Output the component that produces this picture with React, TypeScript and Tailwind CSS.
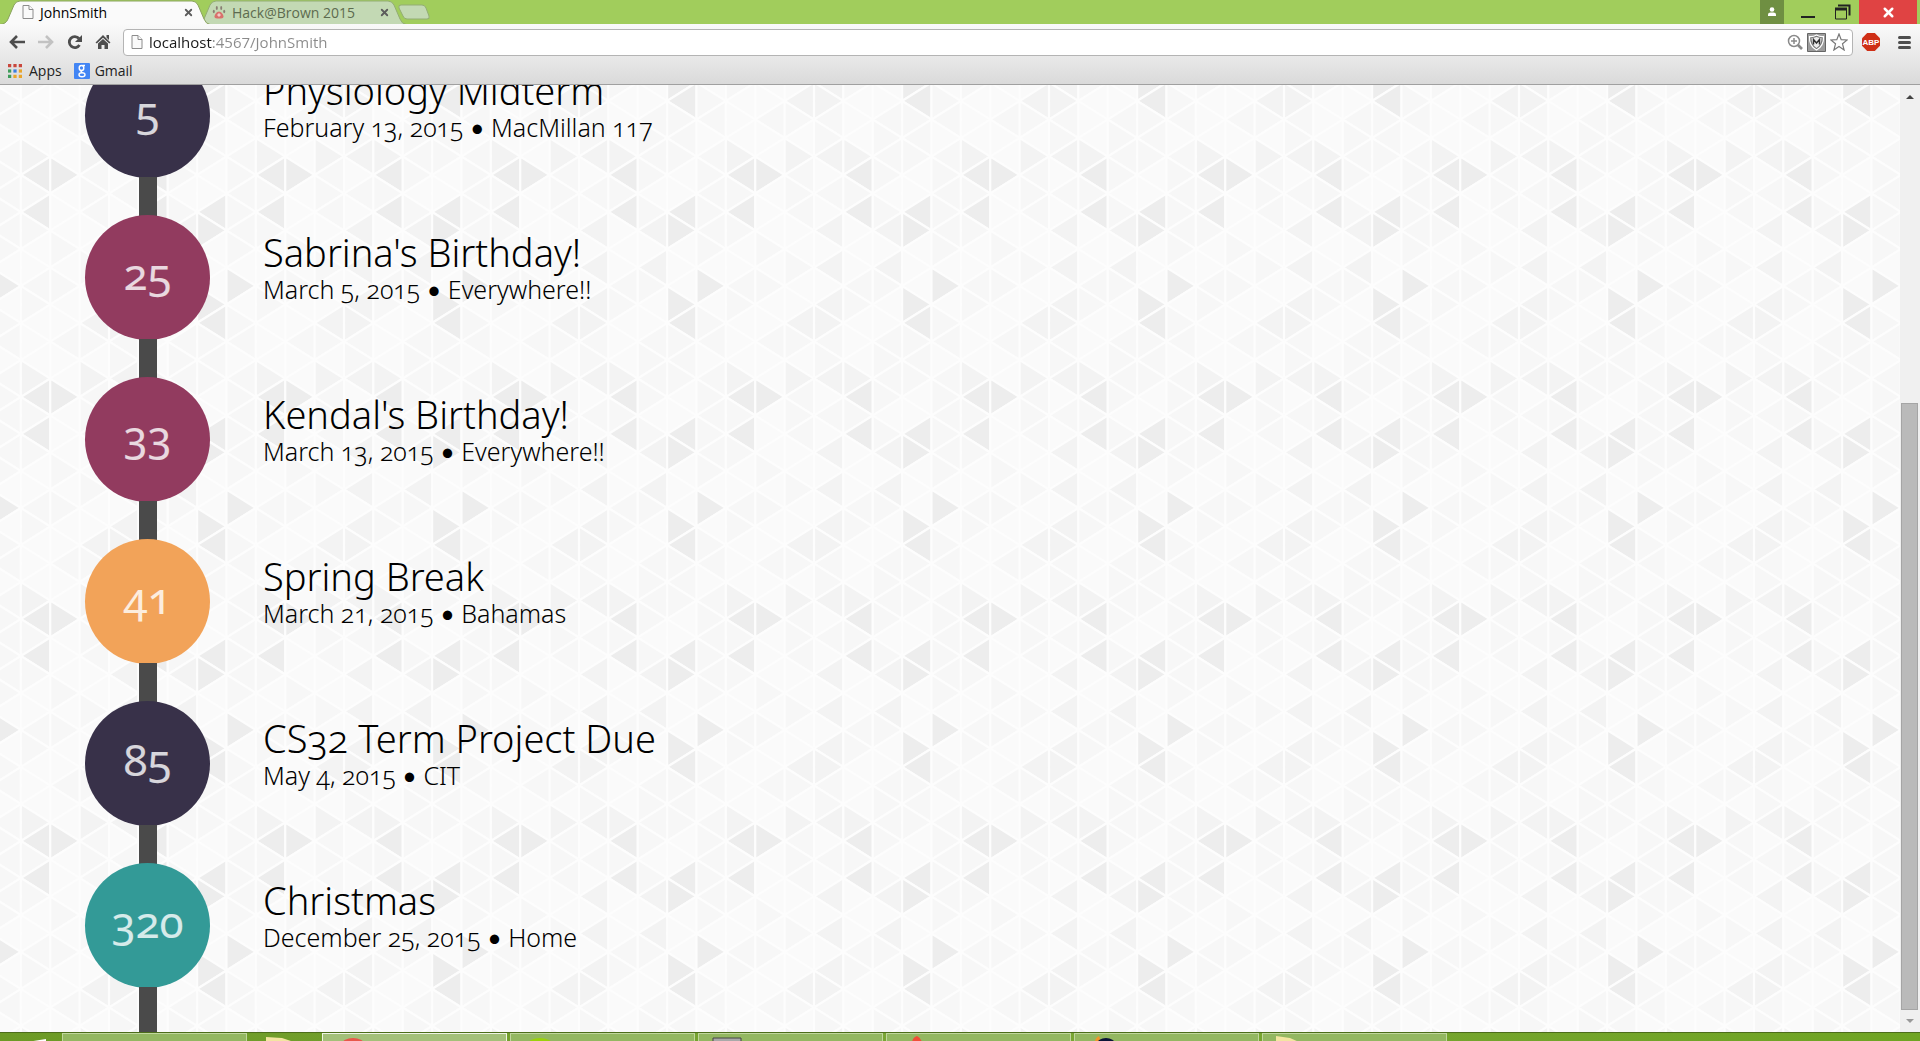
import type { ReactNode } from 'react';
import { X } from 'lucide-react';

const events = [
  { days: 5, title: 'Physiology Midterm', date: 'February 13, 2015', place: 'MacMillan 117', color: 'bg-[#383149]' },
  { days: 25, title: "Sabrina's Birthday!", date: 'March 5, 2015', place: 'Everywhere!!', color: 'bg-[#923b5f]' },
  { days: 33, title: "Kendal's Birthday!", date: 'March 13, 2015', place: 'Everywhere!!', color: 'bg-[#923b5f]' },
  { days: 41, title: 'Spring Break', date: 'March 21, 2015', place: 'Bahamas', color: 'bg-[#f2a359]' },
  { days: 85, title: 'CS32 Term Project Due', date: 'May 4, 2015', place: 'CIT', color: 'bg-[#383149]' },
  { days: 320, title: 'Christmas', date: 'December 25, 2015', place: 'Home', color: 'bg-[#339a97]' },
];

// one string per row of triangles, one digit per column, 0 = lightest
const tile = [
  '20031002',
  '10111011',
  '10110000',
  '22111202',
  '03101331',
  '11001101',
  '03131301',
  '20231100',
  '00001010',
  '20200001',
  '01103110',
  '21030100',
];
const shades = ['#fafafa', '#f7f7f7', '#f3f3f3', '#ededed'];
const colW = 235 / 8;
const rowH = 18.5;

function Triangles() {
  const rows = [tile[11], ...tile, tile[0]];
  return (
    <svg className="absolute inset-0 h-full w-full" aria-hidden="true">
      <pattern id="triangles" patternUnits="userSpaceOnUse" x="109" y="16" width="235" height="222">
        {rows.map((row, i) =>
          row.split('').map((shade, c) => {
            const r = i - 1;
            const y = r * rowH;
            const right = (c + r + 12) % 2 === 0;
            const base = right ? c * colW : (c + 1) * colW;
            const apex = right ? (c + 1) * colW : c * colW;
            return (
              <polygon
                key={`${i}-${c}`}
                points={`${base},${y - rowH} ${apex},${y} ${base},${y + rowH}`}
                fill={shades[Number(shade)]}
                stroke="#fdfdfd"
                strokeWidth="2.2"
                strokeLinejoin="round"
              />
            );
          })
        )}
      </pattern>
      <rect width="100%" height="100%" fill="url(#triangles)" />
    </svg>
  );
}

function PageIcon() {
  return (
    <svg width="12" height="14" viewBox="0 0 12 14" fill="#fafafa" stroke="#8c8c8c" className="shrink-0">
      <path d="M1 .5h6l4 4v9H1z" />
      <path d="M7 .5v4h4" />
    </svg>
  );
}

function PawIcon() {
  return (
    <svg width="14" height="14" viewBox="0 0 14 14" className="shrink-0">
      <path d="M7 6.5c2 0 4.500 3 4.500 5s-2 2-4.500 2-4.500 0-4.500-2 2.500-5 4.500-5z" fill="#d9706c" />
      <g fill="#8a7f74">
        <ellipse cx="1.800" cy="6.500" rx="1" ry="1.800" />
        <ellipse cx="4.800" cy="3" rx="1" ry="2" />
        <ellipse cx="9.200" cy="3" rx="1" ry="2" />
        <ellipse cx="12.200" cy="6.500" rx="1" ry="1.800" />
      </g>
      <path d="M5 10l2-2 2 2-2 2z" fill="#f3c9c5" />
    </svg>
  );
}

function Tab({ icon, label, active }: { icon: ReactNode; label: string; active?: boolean }) {
  return (
    <div className={`relative flex h-6 w-[210px] items-center pr-4 ${active ? 'z-10 pl-[22px]' : '-ml-[14px] pl-[16px]'}`}>
      <svg className="absolute inset-0 h-full w-full" viewBox="0 0 210 24" preserveAspectRatio="none" aria-hidden="true">
        <path
          d="M0 24.500Q6 24 8 19L14 5Q16 1 20 1H192Q196 1 198 5L204 19Q206 24 210 24.500"
          fill={active ? '#fafafa' : '#c3d9b4'}
          stroke={active ? '#8aa35e' : '#93ad74'}
        />
      </svg>
      <button className="relative flex flex-1 items-center gap-[6px] text-left">
        {icon}
        <span className={active ? 'text-black' : 'text-[#5d6b4f]'}>{label}</span>
      </button>
      <button aria-label={`Close ${label}`} className="relative">
        <X size={11} strokeWidth={4} className="text-[#5c5c5c]" />
      </button>
    </div>
  );
}

function TabStrip() {
  return (
    <header className="flex h-6 items-start bg-[#a1cd5c] text-[14px]">
      <Tab active icon={<PageIcon />} label="JohnSmith" />
      <Tab icon={<PawIcon />} label="Hack@Brown 2015" />
      <button aria-label="New tab" className="-ml-2 self-center">
        <svg width="32" height="16" viewBox="0 0 32 16">
          <path d="M3 1h21q3 0 4 3l3 8q1 3-2 3H9q-3 0-4-3L1 4q-1-3 2-3z" fill="#c3d9b4" stroke="#93ad74" />
        </svg>
      </button>
      <div className="ml-auto flex h-full pr-[3px]">
        <button aria-label="User" className="flex w-6 items-center justify-center bg-[#6f8f42]">
          <svg width="10" height="10" viewBox="0 0 10 10" fill="#fff">
            <circle cx="5" cy="2.500" r="2.300" />
            <path d="M1 9V7.500Q1 5.500 3.500 5.500h3Q9 5.500 9 7.500V9z" />
          </svg>
        </button>
        <button aria-label="Minimize" className="flex w-12 items-end justify-center pb-[6px]">
          <span className="h-[2px] w-[14px] bg-[#222]" />
        </button>
        <button aria-label="Restore" className="flex w-[27px] items-center justify-start pl-[3px]">
          <svg width="16" height="16" viewBox="0 0 16 16" fill="none" stroke="#222">
            <path d="M3 1.500h11.500v10" strokeWidth="2" />
            <path d="M.500 5h11v10H.500z" />
            <path d="M0 5h12" strokeWidth="3" />
          </svg>
        </button>
        <button aria-label="Close window" className="flex w-[58px] items-center justify-center bg-[#e04343]">
          <X size={15} strokeWidth={4} className="text-white" />
        </button>
      </div>
    </header>
  );
}

function Toolbar() {
  return (
    <div className="flex h-9 items-center pr-[9px] pl-2">
      <div className="flex w-[115px] items-center gap-[11px]">
        <button aria-label="Back">
          <svg width="18" height="16" viewBox="0 0 18 16" fill="none" stroke="#4d4d4d" strokeWidth="2.600">
            <path d="M17 8H4M9 2L3 8l6 6" />
          </svg>
        </button>
        <button aria-label="Forward">
          <svg width="18" height="16" viewBox="0 0 18 16" fill="none" stroke="#c2c2c2" strokeWidth="2.600">
            <path d="M1 8h13M9 2l6 6-6 6" />
          </svg>
        </button>
        <button aria-label="Reload">
          <svg width="18" height="16" viewBox="0 0 18 16" fill="none" stroke="#4d4d4d" strokeWidth="2.800">
            <path d="M13.500 11A5.500 5.500 0 1 1 13 4.500" />
            <path d="M16 1v7H9z" fill="#4d4d4d" stroke="none" />
          </svg>
        </button>
        <button aria-label="Home">
          <svg width="16" height="16" viewBox="0 0 16 16" fill="#4d4d4d">
            <path d="M8 1l7.500 7.500-1.300 1L8 3.800 1.800 9.500.500 8.500z" />
            <path d="M11.500 1H14v5l-2.500-2.500zM8 5l5 4.500V15H9.500v-4h-3v4H3V9.500z" />
          </svg>
        </button>
      </div>
      <div className="flex h-[27px] flex-1 items-center gap-1 rounded-sm border border-[#b4b4b4] bg-white pr-1 pl-[7px]">
        <PageIcon />
        <input
          aria-label="Address"
          defaultValue="localhost:4567/JohnSmith"
          className="ml-[2px] flex-1 bg-[linear-gradient(to_right,#1a1a1a_63px,#8a8a8a_63px)] bg-clip-text text-[15px] text-transparent outline-none"
        />
        <button aria-label="Zoom">
          <svg width="16" height="16" viewBox="0 0 16 16" fill="none" stroke="#8a8a8a" strokeWidth="1.500">
            <circle cx="7" cy="7" r="5.500" />
            <path d="M4 7h6M7 4v6" />
            <path d="M11 11l4 4" strokeWidth="2.600" />
          </svg>
        </button>
        <button aria-label="Site safety">
          <svg width="19" height="19" viewBox="0 0 19 19">
            <path d="M.500.500h18v18H.500z" fill="#9c9c9c" stroke="#666" />
            <path d="M2.500 3.500Q6 4 9.500 2 13 4 16.500 3.500 17 13 9.500 17 2 13 2.500 3.500z" fill="#777" stroke="#fff" strokeWidth="1.200" />
            <path d="M4.500 5Q7 5 9.500 4q2.500 1 5 1 0 7-5 10-5-3-5-10z" fill="#eee" />
            <path d="M6.500 11.500V6.500l3 3.500 3-3.500v5" fill="none" stroke="#333" strokeWidth="1.500" />
          </svg>
        </button>
        <button aria-label="Bookmark this page">
          <svg width="18" height="18" viewBox="0 0 18 18" fill="#fff" stroke="#777" strokeWidth="1.200">
            <path d="M9 1l2.200 5.700 6 .300-4.700 3.800L14.100 17 9 13.500 3.900 17l1.600-6.200L.800 7l6-.300z" />
          </svg>
        </button>
      </div>
      <button aria-label="Adblock Plus" className="ml-2">
        <svg width="20" height="20" viewBox="0 0 20 20">
          <path d="M6.200 1h7.600L19 6.200v7.600L13.800 19H6.200L1 13.800V6.200z" fill="#cf2f16" />
          <text x="10" y="13" textAnchor="middle" fill="#fff" fontSize="8" fontWeight="700" fontFamily="'Liberation Sans Narrow', 'Liberation Sans', sans-serif">ABP</text>
        </svg>
      </button>
      <button aria-label="Menu" className="ml-[17px] flex flex-col gap-[2px]">
        <span className="h-[3px] w-[13px] rounded-full bg-[#4d4d4d]" />
        <span className="h-[3px] w-[13px] rounded-full bg-[#4d4d4d]" />
        <span className="h-[3px] w-[13px] rounded-full bg-[#4d4d4d]" />
      </button>
    </div>
  );
}

const appColors = ['#c9473d', '#c9473d', '#c9473d', '#3f9c5a', '#3c7ee0', '#e9a52b', '#3f9c5a', '#e9a52b', '#e9a52b'];

function Bookmarks() {
  return (
    <nav className="flex h-6 items-center gap-3 pb-[3px] pl-2 text-[14px] text-[#222]">
      <a href="#apps" className="flex items-center gap-[7px]">
        <svg width="14" height="14" viewBox="0 0 13 13">
          {appColors.map((fill, i) => (
            <rect key={i} x={(i % 3) * 5} y={Math.floor(i / 3) * 5} width="3" height="3" fill={fill} />
          ))}
        </svg>
        Apps
      </a>
      <a href="#gmail" className="flex items-center gap-[5px]">
        <svg width="16" height="16" viewBox="0 0 16 16">
          <rect width="16" height="16" rx="1" fill="#4285f4" />
          <g fill="none" stroke="#fff" strokeWidth="1.400">
            <ellipse cx="7.500" cy="5" rx="2.300" ry="2.500" />
            <path d="M8.500 2.500H11M8 7.500q-2 1 0 2" />
            <ellipse cx="8" cy="11.700" rx="3" ry="2" />
          </g>
        </svg>
        Gmail
      </a>
    </nav>
  );
}

function Timeline() {
  return (
    <ul className="relative -mt-8 pl-[85px] font-['Noto_Sans',sans-serif] font-light oldstyle-nums">
      {events.map((event, i) => (
        <li key={event.title} className="flex gap-[53px]">
          <div className="flex flex-col items-center">
            <div className={`flex size-[125px] items-center justify-center rounded-full pb-[10px] text-[44px] font-normal text-white/80 ${event.color}`}>
              {event.days}
            </div>
            <div className={`-my-px w-[18px] bg-[#4a4a4a] ${i === events.length - 1 ? 'h-16' : 'h-[39px]'}`} />
          </div>
          <div className="pt-[15px] text-black">
            <h2 className="text-[38px] leading-[44px]">{event.title}</h2>
            <p className="text-[25px] leading-[30px]">
              {event.date} <span className="font-[Lato] font-normal">•</span> {event.place}
            </p>
          </div>
        </li>
      ))}
    </ul>
  );
}

function Scrollbar() {
  return (
    <div className="flex w-5 flex-col bg-[#f0f0f0] pr-[2px] pl-[1px]">
      <button aria-label="Scroll up" className="flex h-[22px] items-center justify-center">
        <svg width="8" height="5" viewBox="0 0 8 5" fill="#444"><path d="M0 5l4-4 4 4z" /></svg>
      </button>
      <div className="flex flex-1 flex-col">
        <div className="grow-[297]" />
        <div className="grow-[606] border border-[#a5a5a5] bg-[#bababa]" />
      </div>
      <button aria-label="Scroll down" className="flex h-[22px] items-center justify-center">
        <svg width="8" height="5" viewBox="0 0 8 5" fill="#999"><path d="M0 0l4 4 4-4z" /></svg>
      </button>
    </div>
  );
}

function TaskButton({ label, active, children }: { label: string; active?: boolean; children?: ReactNode }) {
  return (
    <button
      aria-label={label}
      className={`flex w-[185px] items-start overflow-hidden border-x border-t pl-[13px] ${
        active ? 'border-[#eef4e4] bg-[#a3c079]' : 'border-[#c0d69d] bg-[#93b761]'
      }`}
    >
      <svg width="32" height="8" viewBox="0 0 32 8">{children}</svg>
    </button>
  );
}

function Taskbar() {
  return (
    <footer className="flex h-[9px] shrink-0 overflow-hidden border-t border-[#4c6d1a] bg-linear-to-r from-[#6c9a25] via-[#7aa535] to-[#6fa423]">
      <button aria-label="Start" className="flex w-[62px] justify-end pr-4">
        <svg width="22" height="8" viewBox="0 0 22 8"><path d="M0 9.500L22 6v2z" fill="#fff" /></svg>
      </button>
      <TaskButton label="Window 1" />
      <button aria-label="File Explorer" className="w-[75px] pl-[19px]">
        <svg width="26" height="8" viewBox="0 0 26 8"><path d="M0 4l16 1 9 3H0z" fill="#f3e5a0" /></svg>
      </button>
      <div className="flex gap-[3px]">
        <TaskButton label="Window 2" active>
          <ellipse cx="17" cy="10" rx="11" ry="6" fill="#e8574a" />
        </TaskButton>
        <TaskButton label="Window 3">
          <ellipse cx="16" cy="10" rx="12" ry="6" fill="#9ad10c" />
        </TaskButton>
        <TaskButton label="Window 4">
          <path d="M1 9V4h28v5z" fill="#a9a9a9" stroke="#444" />
        </TaskButton>
        <TaskButton label="Window 5">
          <path d="M12 8q1-5 5-6 3 1 5 6z" fill="#f04e37" />
        </TaskButton>
        <TaskButton label="Window 6">
          <path d="M7 8q0-4 4-6l2 6z" fill="#f0962b" />
          <ellipse cx="18" cy="10" rx="9" ry="6" fill="#0b1437" />
        </TaskButton>
        <TaskButton label="Window 7">
          <path d="M0 2l14 2 9 4H0z" fill="#f3e5a0" />
        </TaskButton>
      </div>
    </footer>
  );
}

export default function App() {
  return (
    <div className="flex h-screen flex-col overflow-hidden font-['Open_Sans',sans-serif]">
      <TabStrip />
      <div className="border-b border-[#a0a0a0] bg-linear-to-b from-[#fafafa] to-[#dadada]">
        <Toolbar />
        <Bookmarks />
      </div>
      <div className="flex min-h-0 flex-1">
        <main className="relative flex-1 overflow-hidden bg-[#fafafa]">
          <Triangles />
          <Timeline />
        </main>
        <Scrollbar />
      </div>
      <Taskbar />
    </div>
  );
}
